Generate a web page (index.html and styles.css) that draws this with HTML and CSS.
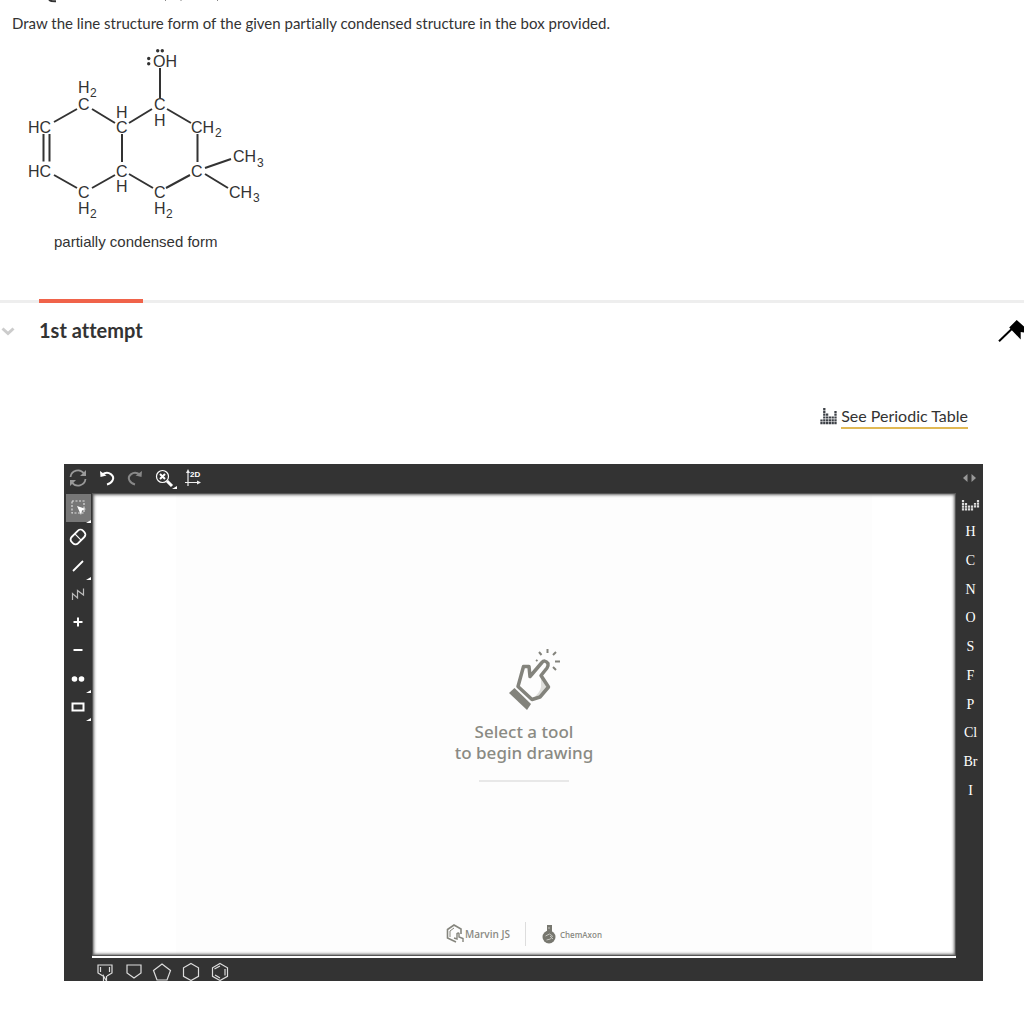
FILE: index.html
```
<!DOCTYPE html>
<html lang="en">
<head>
  <meta charset="UTF-8" />
  <meta name="viewport" content="width=device-width, initial-scale=1.0"/>
  <title>Line structure</title>
  <link rel="stylesheet" href="styles.css">
</head>
<body>

<svg class="crumbs" width="240" height="11" viewBox="0 0 240 11" aria-hidden="true">
  <path d="M49 0Q51 1.500 56 1.300" stroke="#333" stroke-width="2" fill="none"/>
  <path d="M165 0l1 1M181 0v1M218 0l-1 1" stroke="#888" fill="none"/>
</svg>

<main>
  <section class="question">
    <p class="prompt">Draw the line structure form of the given partially condensed structure in the box provided.</p>

    <svg class="molecule" width="256" height="212" viewBox="20 44 256 212" role="img" aria-label="Partially condensed structure">
      <!-- bonds -->
      <g class="bonds">
        <path d="M54 122L77 109M92 109L115 123M129 123L152 109M160 68V98M167 109L191 123"/>
        <path d="M43.500 134V161.500M49.500 134V161.500M122 134V162M197.500 134V162"/>
        <path d="M54 175L77 188M92 188L115 175M129 174L153 188M166 188L190 175M205 168L231 159M205 174L228 188"/>
      </g>
      <!-- lone pairs -->
      <g class="pairs">
        <circle cx="157.700" cy="50.700" r="1.700"/><circle cx="162.300" cy="50.700" r="1.700"/>
        <circle cx="148.700" cy="58.500" r="1.700"/><circle cx="148.700" cy="63.700" r="1.700"/>
      </g>
      <g class="atoms">
        <text x="153" y="67">OH</text>
        <text x="78" y="93">H</text><text x="78" y="110">C</text>
        <text x="28" y="133">HC</text>
        <text x="28" y="177">HC</text>
        <text x="78" y="198">C</text><text x="78" y="214">H</text>
        <text x="116" y="118">H</text><text x="116" y="133">C</text>
        <text x="116" y="177">C</text><text x="116" y="192">H</text>
        <text x="154" y="110">C</text><text x="154" y="126">H</text>
        <text x="191" y="133">CH</text>
        <text x="191" y="177">C</text>
        <text x="233" y="162">CH</text>
        <text x="229" y="198">CH</text>
        <text x="154" y="198">C</text><text x="154" y="214">H</text>
      </g>
      <g class="subs">
        <text x="90" y="97">2</text><text x="90" y="218">2</text><text x="166" y="218">2</text>
        <text x="215" y="137">2</text><text x="257" y="167">3</text><text x="253" y="202">3</text>
      </g>
      <text class="caption" x="54" y="247">partially condensed form</text>
    </svg>
  </section>

  <section class="attempt">
    <header class="attempt-head">
      <svg class="chevron" width="15" height="14" viewBox="0 0 15 14"><path d="M2.500 3.500l5.500 5 5.500-5" fill="none" stroke="#ccc" stroke-width="3"/></svg>
      <h2 class="attempt-title">1st attempt</h2>
      <svg class="pin" width="26" height="24" viewBox="998 320 26 24"><path d="M1016.700 320l-7.500 7.500 11.500 12v-7.500l3.300.5v-6z"/><path d="M999 341.300l13-12.500" stroke="#000" stroke-width="2"/></svg>
    </header>

    <div class="periodic">
      <svg width="17" height="17" viewBox="0 0 17 17" aria-hidden="true">
        <path d="M1.500 16.200V11.500M4.300 16.200V0M7.100 16.200V5M9.900 16.200V8M12.700 16.200V8M15.500 16.200V3" fill="none" stroke="#3d4147" stroke-width="2.300" stroke-dasharray="2.200 .6"/>
      </svg>
      <a class="periodic-link" href="#">See Periodic Table</a>
    </div>

    <div class="sketcher">
      <div class="bar top-bar">
        <div class="tools row-tools">
          <button class="tool" aria-label="Clean"><svg width="20" height="20" viewBox="0 0 20 20"><g fill="none" stroke="#999" stroke-width="1.800"><path d="M2.500 9A7.500 7.500 0 0 1 16 5.500M17.500 11A7.500 7.500 0 0 1 4 14.500"/></g><path d="M18 2v6h-6zM2 18v-6h6z" fill="#999"/></svg></button>
          <button class="tool" aria-label="Undo"><svg width="20" height="20" viewBox="0 0 20 20"><path d="M5 6.500C12 2 18 8 15.500 12.500Q14 15.500 10 16.500" fill="none" stroke="#fff" stroke-width="2"/><path d="M3 3l.5 6 6-1.500z" fill="#fff"/></svg></button>
          <button class="tool" aria-label="Redo"><svg width="20" height="20" viewBox="0 0 20 20"><path d="M15 6.500C8 2 2 8 4.500 12.500Q6 15.500 10 16.500" fill="none" stroke="#888" stroke-width="2"/><path d="M17 3l-.5 6-6-1.500z" fill="#888"/></svg></button>
          <button class="tool more" aria-label="Zoom"><svg width="20" height="20" viewBox="0 0 20 20" fill="none" stroke="#fff"><circle cx="8.500" cy="8.500" r="6" stroke-width="1.200"/><path d="M6 6l5 5M11 6l-5 5" stroke-width="2"/><path d="M13 13l5 5" stroke-width="3"/></svg></button>
          <button class="tool" aria-label="Clean in 2D"><svg width="20" height="20" viewBox="0 0 20 20"><path d="M5 18V3M2 14.500h14" stroke="#eee" stroke-width="1.200"/><path d="M5 1l2 4H3zM18 14.500l-4 2v-4z" fill="#eee"/><text class="two-d" x="7" y="9">2D</text></svg></button>
        </div>
        <svg class="arrows" width="13" height="10" viewBox="0 0 13 10"><path d="M4.500 1v8L0 5zM8.500 1v8L13 5z" fill="#999"/></svg>
      </div>

      <div class="bar left-bar">
        <div class="tools column-tools">
          <button class="tool more active" aria-label="Select"><svg width="20" height="20" viewBox="0 0 20 20"><path d="M3 3h12v12H3z" fill="none" stroke="#ddd" stroke-width="1.200" stroke-dasharray="2 1.500"/><path d="M8 8l9 3-4 1.500L12 17z" fill="#fff"/></svg></button>
          <button class="tool" aria-label="Erase"><svg width="20" height="20" viewBox="0 0 20 20"><g transform="rotate(-45 10 10)" fill="none" stroke="#fff" stroke-width="1.800"><rect x="2" y="5.500" width="16" height="9" rx="3.500"/><path d="M10 6v8" stroke-width="1.200"/></g></svg></button>
          <button class="tool more" aria-label="Bond"><svg width="20" height="20" viewBox="0 0 20 20"><path d="M5 15L15 5" stroke="#fff" stroke-width="1.800"/></svg></button>
          <button class="tool" aria-label="Chain"><svg width="20" height="20" viewBox="0 0 20 20"><path d="M4.500 16v-6.500l5 4.500V6.500l6 4.500V4.500" fill="none" stroke="#bbb" stroke-width="1.200"/></svg></button>
          <button class="tool" aria-label="Increase charge"><svg width="20" height="20" viewBox="0 0 20 20"><path d="M5.500 10h9M10 5.500v9" stroke="#fff" stroke-width="2"/></svg></button>
          <button class="tool" aria-label="Decrease charge"><svg width="20" height="20" viewBox="0 0 20 20"><path d="M5.500 10h9" stroke="#fff" stroke-width="2"/></svg></button>
          <button class="tool more" aria-label="Lone pair"><svg width="20" height="20" viewBox="0 0 20 20" fill="#fff"><circle cx="6.500" cy="10" r="2.800"/><circle cx="13.500" cy="10" r="2.800"/></svg></button>
          <button class="tool more" aria-label="Rectangle"><svg width="20" height="20" viewBox="0 0 20 20"><path d="M4.500 6.500h11v7h-11z" fill="none" stroke="#fff" stroke-width="2"/></svg></button>
        </div>
      </div>

      <div class="canvas">
        <div class="sheet">
          <div class="hint">
            <svg width="54" height="64" viewBox="507 648 54 64" aria-hidden="true">
              <path d="M518.500 687L523 667.500H529L530 678 541 664Q545 660 548 664L541 676.500 549 688 540 699 531 702z" fill="#fdfdfd"/>
              <path d="M541 678l6 10-6 9-9 3q8-6 9-12z" fill="#dededb"/>
              <path d="M518 687.500L523.500 667.500H529L530 677.500 541.500 664Q545 660 548 664.500 548.500 667 547 669L541 676.500 548.500 688 540 698 532 700.500z" fill="none" stroke="#83837c" stroke-width="3.500" stroke-linejoin="round"/>
              <path d="M514.500 689L531 705 527 711 509 694z" fill="#83837c"/>
              <path d="M539 653l2.500 3M547.500 650v4M556 653l-3 3M555 662.500h5M553 668l3 3M536 661l1.500 1" stroke="#83837c" stroke-width="2"/>
            </svg>
            <p class="hint-text">Select a tool<br>to begin drawing</p>
          </div>
          <div class="brands">
            <div class="brand marvin">
              <svg width="19" height="20" viewBox="0 0 19 20" fill="none" stroke="#85857d" stroke-width="1.600"><path d="M10 18L1.500 14V5.500L8 1l7 4v5"/><path d="M4 13V7l4-3" stroke-width="1"/><path d="M8 14l3 1V9.500q1.500-1 2 0V13l4 1.500V18" stroke-width="1.400"/></svg>
              <span>Marvin JS</span>
            </div>
            <div class="brand chemaxon">
              <svg width="14" height="20" viewBox="0 0 14 20"><path d="M5 1h5v7H5z" fill="#77776f"/><circle cx="7" cy="13" r="6.500" fill="#77776f"/><path d="M3.500 12l4-2 3 2-2 3-4 1M8 12l3 3M7 3v2" fill="none" stroke="#c4c4be"/></svg>
              <span>ChemAxon</span>
            </div>
          </div>
        </div>
      </div>

      <div class="bar right-bar">
        <div class="tools atom-tools">
          <button class="tool" aria-label="Periodic table"><svg width="20" height="12" viewBox="0 0 20 12"><path d="M2 11.500V1M5 11.500V4M8 11.500V6M11 11.500V6M14 8.500V4M17 8.500V1" stroke="#ddd" stroke-width="2.200" stroke-dasharray="2.200 .6"/></svg></button>
          <button class="tool">H</button>
          <button class="tool">C</button>
          <button class="tool">N</button>
          <button class="tool">O</button>
          <button class="tool">S</button>
          <button class="tool">F</button>
          <button class="tool">P</button>
          <button class="tool">Cl</button>
          <button class="tool">Br</button>
          <button class="tool">I</button>
        </div>
      </div>

      <div class="bar bottom-bar">
        <div class="tools row-tools">
          <button class="tool" aria-label="Pyrrole"><svg width="20" height="20" viewBox="0 0 20 20" fill="none" stroke="#ddd" stroke-width="1.200"><path d="M8 14l-5-3V3h14v8l-5 3M5.500 5v5M14.500 5v5"/><path d="M8.500 19v-5l3 5v-5"/></svg></button>
          <button class="tool" aria-label="Cyclopentane, flat top"><svg width="20" height="20" viewBox="0 0 20 20" fill="none" stroke="#ddd" stroke-width="1.200"><path d="M3 3h14v8l-7 5-7-5z"/></svg></button>
          <button class="tool" aria-label="Cyclopentane"><svg width="20" height="20" viewBox="0 0 20 20" fill="none" stroke="#ddd" stroke-width="1.200"><path d="M10 2l8.500 6.500L15 18H5L1.500 8.500z"/></svg></button>
          <button class="tool" aria-label="Cyclohexane"><svg width="20" height="20" viewBox="0 0 20 20" fill="none" stroke="#ddd" stroke-width="1.200"><path d="M10 1.500l7.500 4.300v8.500L10 18.500l-7.500-4.200V5.800z"/></svg></button>
          <button class="tool" aria-label="Benzene"><svg width="20" height="20" viewBox="0 0 20 20" fill="none" stroke="#ddd" stroke-width="1.200"><path d="M10 1.500l7.500 4.300v8.500L10 18.500l-7.500-4.200V5.800zM4.500 7L10 4M15 7v6.500M5 13l5 3"/></svg></button>
        </div>
      </div>
    </div>
  </section>
</main>

</body>
</html>
```
FILE: styles.css
```
* {
  box-sizing: border-box;
}
body {
  margin: 0;
  background-color: #fff;
  color: #333;
  font-family: Lato, sans-serif;
  font-variant-ligatures: none;
  overflow-x: hidden;
}
svg {
  display: block;
  flex: none;
}
.prompt {
  margin: 0;
  padding-left: 12px;
  font-size: 15px;
  line-height: 24px;
}
.molecule {
  margin: 9px 0 0 20px;
  font-family: "Liberation Sans", Arial, sans-serif;
  fill: #333;
}
.bonds {
  stroke: #333;
  stroke-width: 2;
}
.atoms {
  font-size: 16px;
}
.subs {
  font-size: 12px;
}
.caption {
  font-size: 15px;
}

/* attempt header */
.attempt {
  margin-top: 44px;
}
.attempt-head {
  display: flex;
  align-items: center;
  height: 60px;
  border-top: 3px solid #eee;
}
.chevron {
  margin-right: 24px;
}
.attempt-title {
  align-self: flex-start;
  margin: -4px auto 0 0;
  border-top: 4px solid #f0634a;
  font-size: 20px;
  line-height: 54px;
}
.periodic {
  display: flex;
  align-items: center;
  justify-content: flex-end;
  gap: 4px;
  margin: 44px 56px 35px 0;
}
.periodic-link {
  border-bottom: 2px solid #e0b854;
  color: #333;
  font-size: 16px;
  line-height: 23px;
  text-decoration: none;
}

/* structure editor */
.sketcher {
  display: grid;
  grid-template: 29px 465px 23px / 28px 1fr 27px;
  margin: 0 41px 43px 64px;
  background-color: #333;
}
.top-bar, .bottom-bar {
  grid-column: 1 / -1;
  display: flex;
  align-items: flex-start;
}
.top-bar {
  justify-content: space-between;
  padding: 3px 7px 0 0;
}
.arrows {
  margin-top: 6px;
}
.bottom-bar {
  padding: 3px 0 0 27px;
  overflow: hidden;
}
.tools {
  display: flex;
}
.row-tools {
  width: 143px;
  height: 22px;
}
.column-tools {
  flex-direction: column;
  height: 229px;
  margin-top: -1px;
}
.atom-tools {
  flex-direction: column;
  height: 314px;
  margin-top: -1px;
}
.tool {
  position: relative;
  flex: 1 1 0;
  display: flex;
  align-items: center;
  justify-content: center;
  min-height: 0;
  padding: 0;
  border: none;
  background: none;
  color: #fff;
  font-family: "Liberation Serif", "Times New Roman", serif;
  font-size: 14px;
  line-height: 20px;
  cursor: pointer;
}
.atom-tools .tool {
  padding: 0 0 2px 2px;
}
.atom-tools .tool:first-child {
  padding-bottom: 0;
}
.active {
  background: #777 content-box;
  padding: 2px 1px 1px 2px;
}
.more::after {
  content: "";
  position: absolute;
  right: 1px;
  bottom: 0;
  border-bottom: 3px solid #fff;
  border-left: 5px solid transparent;
}
.two-d {
  fill: #fff;
  font-family: "Liberation Sans", Arial, sans-serif;
  font-size: 8px;
  font-weight: bold;
}
.canvas {
  border-bottom: 2px solid #fff;
}
.sheet {
  display: flex;
  flex-direction: column;
  align-items: center;
  height: 100%;
  border: 1px solid #555;
  background: linear-gradient(#fdfdfd, #fdfdfd) center / 696px 100% no-repeat #fff;
  box-shadow: inset 0 0 3px 1px #666;
}
.hint {
  display: flex;
  flex-direction: column;
  align-items: center;
  margin: auto;
  padding: 31px 0 18px;
}
.hint svg {
  margin-left: 20px;
}
.hint-text {
  margin: 10px 0 0;
  color: #8a8a83;
  font-family: "Noto Sans", "Open Sans", sans-serif;
  font-size: 17px;
  font-weight: 500;
  line-height: 21px;
  text-align: center;
}
.hint::after {
  content: "";
  width: 90px;
  height: 2px;
  margin-top: 17px;
  background-color: #e8e8e8;
}
.brands {
  display: flex;
  align-items: center;
  margin-bottom: 9px;
  color: #8a8a83;
  font-family: "Open Sans", sans-serif;
}
.brand {
  display: flex;
  align-items: center;
  height: 24px;
}
.marvin {
  padding-right: 15px;
  border-right: 1px solid #ddd;
  font-size: 10px;
  font-weight: 600;
}
.chemaxon {
  gap: 4px;
  padding-left: 16px;
  font-size: 8px;
  font-weight: 600;
}
```
